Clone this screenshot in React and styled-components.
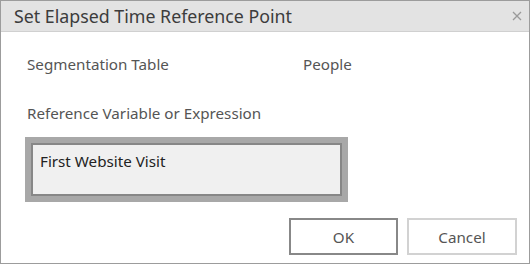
import React from "react";
import styled, { createGlobalStyle } from "styled-components";

const GlobalStyle = createGlobalStyle`
  html, body { margin: 0; padding: 0; background: #fff; }
  body { font-family: "Noto Sans", "Open Sans", sans-serif; }
`;

const Dialog = styled.div`
  box-sizing: border-box;
  width: 530px;
  height: 264px;
  border: 1px solid #9c9c9c;
  background: #fff;
  display: flex;
  flex-direction: column;
`;

const TitleBar = styled.div`
  height: 30px;
  background: #e3e3e3;
  border-bottom: 1px solid #d0d0d0;
  display: flex;
  align-items: center;
  justify-content: space-between;
  padding: 0 4px 0 13px;
`;

const Title = styled.div`
  font-size: 17.8px;
  line-height: 22px;
  color: #3c3c3c;
`;

const Close = styled.button`
  border: none;
  background: transparent;
  padding: 0;
  width: 16px;
  height: 16px;
  display: flex;
  align-items: center;
  justify-content: center;
`;

const Body = styled.div`
  flex: 1;
  display: flex;
  flex-direction: column;
  padding: 22px 12px 0 24px;
`;

const FieldRow = styled.div`
  display: grid;
  grid-template-columns: 276px auto;
  font-size: 15.2px;
  line-height: 20px;
  color: #555;
  padding-left: 2px;
`;

const Label = styled.div`
  font-size: 15.2px;
  line-height: 20px;
  color: #555;
  padding-left: 2px;
  margin-top: 29px;
`;

const ExprBox = styled.div`
  box-sizing: border-box;
  margin-top: 14px;
  width: 323px;
  height: 65px;
  flex-shrink: 0;
  border: 6px solid #a8a8a8;
`;

const ExprInner = styled.div`
  box-sizing: border-box;
  height: 100%;
  border: 2px solid #878787;
  background: #f0f0f0;
  padding: 6px 7px;
  font-size: 15.2px;
  line-height: 20px;
  color: #222;
`;

const Actions = styled.div`
  display: flex;
  justify-content: flex-end;
  gap: 9px;
  margin-top: 16px;
`;

const Button = styled.button`
  box-sizing: border-box;
  width: ${(p) => (p.$wide ? 110 : 109)}px;
  height: 37px;
  background: #fff;
  border: 2px solid ${(p) => (p.$primary ? "#888" : "#d2d2d2")};
  font-family: inherit;
  font-size: 15.2px;
  color: #555;
`;

export default function App() {
  return (
    <>
      <GlobalStyle />
      <Dialog>
        <TitleBar>
          <Title>Set Elapsed Time Reference Point</Title>
          <Close aria-label="Close">
            <svg width="10" height="10" viewBox="0 0 10 10">
              <path d="M1 1L9 9M9 1L1 9" stroke="#9a9a9a" strokeWidth="1.3" />
            </svg>
          </Close>
        </TitleBar>
        <Body>
          <FieldRow>
            <span>Segmentation Table</span>
            <span>People</span>
          </FieldRow>
          <Label>Reference Variable or Expression</Label>
          <ExprBox>
            <ExprInner>First Website Visit</ExprInner>
          </ExprBox>
          <Actions>
            <Button $primary>OK</Button>
            <Button $wide>Cancel</Button>
          </Actions>
        </Body>
      </Dialog>
    </>
  );
}
